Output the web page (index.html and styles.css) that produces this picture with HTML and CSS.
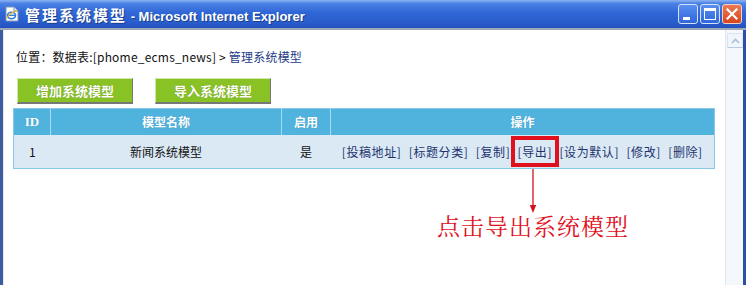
FILE: index.html
```html
<!DOCTYPE html>
<html lang="zh-CN">
<head>
<meta charset="utf-8">
<title>管理系统模型</title>
<link rel="stylesheet" href="styles.css">
</head>
<body>
<div class="window">
  <div class="titlebar">
    <svg class="app-icon" width="16" height="16" viewBox="0 0 16 16">
      <path d="M2 1h8l4 4v10H2z" fill="#fff" stroke="#7f95b8" stroke-width="1"/>
      <path d="M10 1v4h4" fill="#dfe8f5" stroke="#7f95b8" stroke-width="1"/>
      <ellipse cx="7.5" cy="9.5" rx="4" ry="3.2" fill="none" stroke="#2d7fe0" stroke-width="1.6"/>
      <path d="M4 9.3h7" stroke="#2d7fe0" stroke-width="1.4"/>
      <path d="M2.5 12.5c2-4 7-7 11-8" fill="none" stroke="#f0b020" stroke-width="1.2"/>
    </svg>
    <span class="title"><span class="title-cn">管理系统模型</span> - Microsoft Internet Explorer</span>
    <div class="win-btns">
      <span class="wbtn"><span class="min-glyph"></span></span>
      <span class="wbtn"><span class="max-glyph"></span></span>
      <span class="wbtn close">
        <svg width="12" height="12" viewBox="0 0 12 12"><path d="M1.5 1.5l9 9M10.5 1.5l-9 9" stroke="#fff" stroke-width="2.2" stroke-linecap="square"/></svg>
      </span>
    </div>
  </div>
  <div class="frame">
    <div class="content">
      <div class="crumb">位置：数据表:[phome_ecms_news] &gt; <a class="crumb-link">管理系统模型</a></div>
      <div class="btns">
        <span class="gbtn">增加系统模型</span>
        <span class="gbtn">导入系统模型</span>
      </div>
      <table class="grid">
        <tr class="head">
          <th class="c-id">ID</th>
          <th class="c-name">模型名称</th>
          <th class="c-on">启用</th>
          <th class="c-ops">操作</th>
        </tr>
        <tr class="row">
          <td class="c-id">1</td>
          <td class="c-name">新闻系统模型</td>
          <td class="c-on">是</td>
          <td class="c-ops"><a>[投稿地址]</a> <a>[标题分类]</a> <a>[复制]</a> <a class="hl">[导出]</a> <a>[设为默认]</a> <a>[修改]</a> <a>[删除]</a></td>
        </tr>
      </table>
      <div class="note">
        <svg class="arrow" width="10" height="45" viewBox="0 0 10 45">
          <path d="M5 0v38" stroke="#d8101c" stroke-width="1.3"/>
          <path d="M1.8 36l3.2 8 3.2-8z" fill="#d8101c"/>
        </svg>
        <div class="note-text">点击导出系统模型</div>
      </div>
    </div>
    <div class="scrollbar">
      <div class="sb-up">
        <svg width="9" height="6" viewBox="0 0 9 6"><path d="M1 5l3.5-3.5L8 5" fill="none" stroke="#a9bfd9" stroke-width="1.6"/></svg>
      </div>
    </div>
  </div>
</div>
</body>
</html>
```
FILE: styles.css
```css
html, body {
  margin: 0;
  padding: 0;
  background: #fff;
}
.window {
  width: 746px;
  height: 285px;
  display: flex;
  flex-direction: column;
  overflow: hidden;
}
.titlebar {
  height: 28px;
  flex: none;
  display: flex;
  align-items: center;
  padding-left: 4px;
  background: linear-gradient(#8db4f2 0, #4b82e4 12%, #2f66d6 45%, #2a5dcc 80%, #2352bd 100%);
  border-bottom: 2px solid #9ea8b8;
}
.app-icon {
  flex: none;
  margin-right: 5px;
}
.title {
  color: #fff;
  font-family: "Liberation Sans", Arial, sans-serif;
  font-weight: bold;
  font-size: 13px;
  text-shadow: 1px 1px 0 #1a3f8c;
  white-space: nowrap;
}
.title-cn {
  font-family: "Noto Sans CJK SC", sans-serif;
  font-size: 15px;
  letter-spacing: 2px;
}
.win-btns {
  margin-left: auto;
  display: flex;
  gap: 2px;
  padding-right: 4px;
}
.wbtn {
  width: 18px;
  height: 18px;
  border: 1px solid #d6e2f8;
  border-radius: 3px;
  background: linear-gradient(#5a8ff0, #2f66db);
  display: flex;
  align-items: center;
  justify-content: center;
}
.wbtn.close {
  background: linear-gradient(#ea7a55, #d8461e);
  border-color: #f3d2c4;
}
.min-glyph {
  width: 7px;
  height: 3px;
  background: #fff;
  margin-top: 9px;
  margin-right: 4px;
}
.max-glyph {
  width: 10px;
  height: 8px;
  border: 1px solid #fff;
  border-top-width: 3px;
}
.frame {
  flex: 1;
  display: flex;
  border-left: 3px solid #3f5c9f;
  border-right: 4px solid #2d4fa4;
}
.content {
  flex: 1;
  padding: 0 10px 0 9px;
  border-left: 1px solid #e4ecf8;
  font-family: "Noto Sans CJK SC", sans-serif;
  font-size: 12px;
  color: #111;
}
.crumb {
  margin-top: 18px;
  padding-left: 3px;
  line-height: 18px;
  height: 18px;
  letter-spacing: 0.2px;
}
.crumb-link {
  color: #1c3a86;
}
.btns {
  margin-top: 12px;
  display: flex;
  gap: 22px;
  padding-left: 4px;
}
.gbtn {
  width: 114px;
  height: 23px;
  line-height: 23px;
  text-align: center;
  background: #89c225;
  border-top: 1px solid #cfe6a6;
  border-left: 1px solid #cfe6a6;
  border-right: 1px solid #777;
  border-bottom: 2px solid #777;
  color: #fff;
  font-weight: bold;
  font-size: 13px;
  text-shadow: 0 0 1px #5e8a10;
}
.grid {
  margin-top: 4px;
  width: 702px;
  border-collapse: collapse;
  border: 1px solid #86c8e6;
}
.grid th, .grid td {
  padding: 0;
  text-align: center;
}
.head {
  height: 26px;
  background: #50b3de;
}
.head th {
  color: #fff;
  font-weight: bold;
  border-left: 1px solid #a5daf1;
  text-shadow: 0 0 1px #3a8fba;
}
.head th:first-child {
  border-left: none;
}
.head .c-id {
  font-family: "Liberation Serif", serif;
  font-size: 13px;
}
.row {
  height: 34px;
  background: #dbe9f5;
}
.c-id { width: 36px; }
.c-name { width: 230px; }
.c-on { width: 48px; }
.row .c-ops {
  letter-spacing: 0.6px;
  word-spacing: 4px;
}
.c-ops a {
  color: #23336e;
}
.c-ops .hl {
  outline: 4px solid #e0101c;
  outline-offset: 3px;
}
.note {
  width: 200px;
  margin-left: 420px;
  display: flex;
  flex-direction: column;
  align-items: center;
}
.arrow {
  display: block;
}
.note-text {
  color: #e0101c;
  font-family: "Noto Serif CJK SC", "Noto Sans CJK SC", serif;
  font-size: 23px;
  line-height: 24px;
  letter-spacing: 1px;
}
.scrollbar {
  width: 16px;
  flex: none;
  background: #f4f8fd;
  border-left: 1px solid #dfe6ef;
  padding-top: 3px;
  padding-left: 1px;
}
.sb-up {
  width: 14px;
  height: 13px;
  border: 1px solid #dbe5f1;
  border-bottom-color: #b9c9de;
  background: #f1f6fd;
  display: flex;
  align-items: center;
  justify-content: center;
}
```
